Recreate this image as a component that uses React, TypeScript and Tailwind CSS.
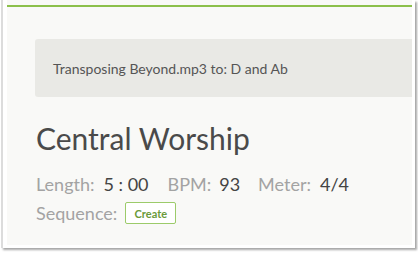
import React from 'react';

const App: React.FC = () => {
  return (
    <div className="w-[418px] h-[253px] bg-white" style={{ fontFamily: 'Lato, "Open Sans", sans-serif' }}>
      <div className="ml-px w-[414px] h-[248px] bg-white border-l-2 border-[#dcdcdc] pl-[4px] pr-[3px] pb-[3px] shadow-[2px_2px_2px_rgba(0,0,0,0.35)]">
        <div className="h-[245px] bg-[#f9f9f7] pt-[5px]">
          <div className="h-[2px] bg-[#8cc04b]" />
          {/* Notice */}
          <div className="mt-[32px] ml-[28px] h-[58px] bg-[#e9e9e5] rounded-l-[3px] flex items-center pl-[18px]">
            <span className="text-[14px] text-[#555555]">Transposing Beyond.mp3 to: D and Ab</span>
          </div>
          {/* Song info */}
          <div className="pl-[29px] pt-[24px]">
            <h1 className="text-[30px] leading-[34px] text-[#4a4a4a]">Central Worship</h1>
            <div className="mt-[18px] flex items-baseline text-[18px] leading-[22px]">
              <span className="text-[#a3a3a3]">Length:</span>
              <span className="ml-[9px] text-[#444444]">5 : 00</span>
              <span className="ml-[19px] text-[#a3a3a3]">BPM:</span>
              <span className="ml-[8px] text-[#444444]">93</span>
              <span className="ml-[18px] text-[#a3a3a3]">Meter:</span>
              <span className="ml-[9px] text-[#444444]">4/4</span>
            </div>
            <div className="mt-[7px] flex items-center text-[18px] leading-[22px]">
              <span className="text-[#a3a3a3]">Sequence:</span>
              <button className="ml-[8px] h-[22px] w-[51px] border border-[#9ccb6a] rounded-[2px] bg-white text-[11px] leading-none font-bold text-[#6a9a3a] flex items-center justify-center">
                Create
              </button>
            </div>
          </div>
        </div>
      </div>
    </div>
  );
};

export default App;
